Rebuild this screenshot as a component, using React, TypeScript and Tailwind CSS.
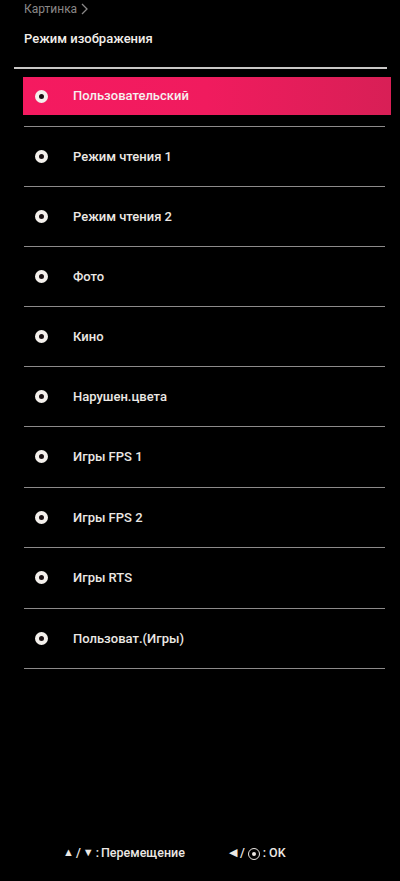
import React from "react";

const modes = [
  "Пользовательский",
  "Режим чтения 1",
  "Режим чтения 2",
  "Фото",
  "Кино",
  "Нарушен.цвета",
  "Игры FPS 1",
  "Игры FPS 2",
  "Игры RTS",
  "Пользоват.(Игры)",
];

function Radio() {
  return (
    <span className="block w-[13px] h-[13px] rounded-full border-[4px] border-[#f4f0ec] bg-[#1a1012] shrink-0" />
  );
}

export default function App() {
  return (
    <main
      className="w-[400px] h-[881px] bg-black text-[#ece8e4] flex flex-col overflow-hidden"
      style={{ fontFamily: "Roboto, 'Liberation Sans', sans-serif" }}
    >
      {/* Header */}
      <div className="pl-[24px] pt-[1px] flex items-center text-[12px] leading-[16px] text-[#8a8888]">
        Картинка
        <svg width="9" height="12" viewBox="0 0 9 12" className="ml-[3px]">
          <path d="M2 1 L7 6 L2 11" fill="none" stroke="#8a8888" strokeWidth="1.3" />
        </svg>
      </div>
      <div className="pl-[24px] mt-[13px] text-[13px] leading-[18px] font-medium text-[#f2eeea]">
        Режим изображения
      </div>
      <div className="ml-[14px] w-[373px] h-[2px] bg-[#c9c7c6] mt-[19px]" />

      {/* Modes */}
      <ul className="flex flex-col">
        {modes.map((m, i) => (
          <li key={m} className="flex flex-col">
            <div className={`${i === 0 ? "h-[57px] pb-[3px]" : i > 5 ? "h-[59.5px]" : "h-[59px]"} flex items-center`}>
              {i === 0 ? (
                <div className="ml-[23px] w-[368px] h-[38px] flex items-center bg-gradient-to-r from-[#f51a60] via-[#f01b5e] to-[#d81f56]">
                  <span className="ml-[12px] flex">
                    <Radio />
                  </span>
                  <span className="ml-[25px] text-[13px] font-medium text-[#f6f0f0]">
                    {m}
                  </span>
                </div>
              ) : (
                <div className="flex items-center pl-[35px]">
                  <Radio />
                  <span className="ml-[25px] text-[13px] font-medium">{m}</span>
                </div>
              )}
            </div>
            <div className="ml-[24px] w-[361px] h-[1px] bg-[#8c8a8a]" />
          </li>
        ))}
      </ul>

      {/* Footer hints */}
      <div className="mt-auto mb-[18px] flex items-center text-[12.5px] font-medium text-[#ece8e4]">
        <div className="ml-[63px] flex items-center">
          <span className="text-[11px]">▲</span>
          <span className="mx-[2px]">/</span>
          <span className="text-[11px]">▼</span>
          <span className="mx-[2px]">:</span>
          <span>Перемещение</span>
        </div>
        <div className="ml-[44px] flex items-center">
          <span className="text-[11px]">◀</span>
          <span className="mx-[3px]">/</span>
          <span className="w-[12px] h-[12px] rounded-full border-[1.5px] border-[#ece8e4] flex items-center justify-center">
            <span className="w-[4px] h-[4px] rounded-full bg-[#ece8e4]" />
          </span>
          <span className="mx-[3px]">:</span>
          <span>OK</span>
        </div>
      </div>
    </main>
  );
}
